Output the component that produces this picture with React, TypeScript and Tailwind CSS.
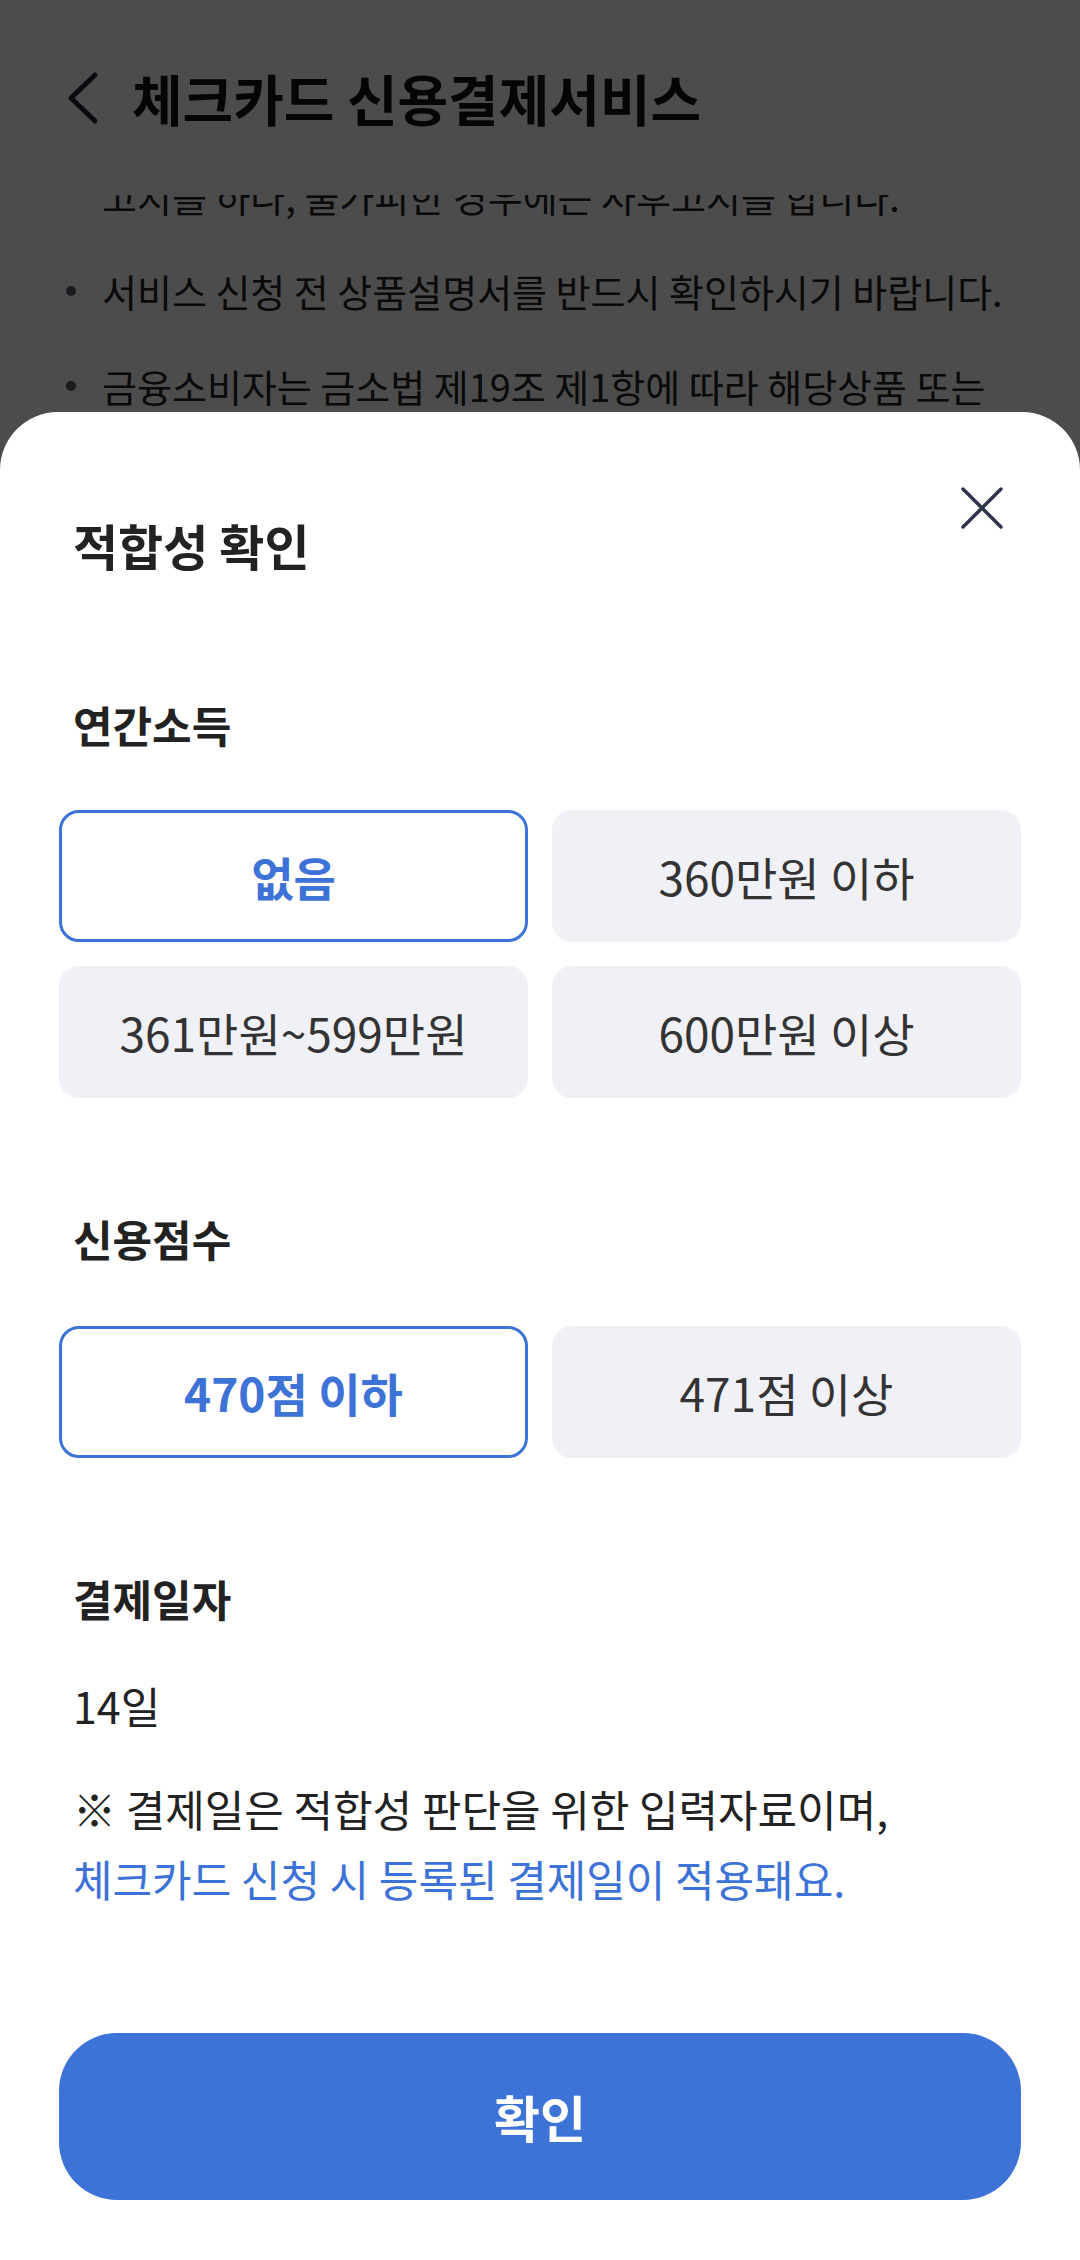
import { useState } from "react";

const font = { fontFamily: '"Noto Sans CJK KR", "Noto Sans", sans-serif' };

const incomeOptions = ["없음", "360만원 이하", "361만원~599만원", "600만원 이상"];
const scoreOptions = ["470점 이하", "471점 이상"];

function Option({
  label,
  selected,
  onClick,
}: {
  label: string;
  selected: boolean;
  onClick: () => void;
}) {
  return (
    <button
      type="button"
      onClick={onClick}
      className={
        selected
          ? "h-[132px] rounded-[20px] border-[3px] border-[#3d72d6] bg-white text-[46px] font-bold text-[#3d72d6]"
          : "h-[132px] rounded-[20px] bg-[#f0f1f6] text-[46px] text-[#333333]"
      }
    >
      {label}
    </button>
  );
}

function App() {
  const [income, setIncome] = useState(0);
  const [score, setScore] = useState(0);

  return (
    <div
      className="relative w-[1080px] h-[2260px] overflow-hidden bg-white"
      style={font}
    >
      {/* page behind the sheet */}
      <div className="flex flex-col">
        <div className="h-[195px] flex items-center pl-[62px] gap-[30px]">
          <svg width="40" height="56" viewBox="0 0 40 56" fill="none">
            <path
              d="M33 5 L9 28 L33 51"
              stroke="#1e2738"
              strokeWidth="5"
              strokeLinecap="round"
              strokeLinejoin="round"
            />
          </svg>
          <h1 className="text-[55px] font-bold text-[#111111] leading-none">
            체크카드 신용결제서비스
          </h1>
        </div>
        <div className="h-[300px] overflow-hidden">
          <ul className="-mt-[27px] flex flex-col gap-[39px] text-[38px] text-[#222222]">
            <li className="pl-[102px] leading-[56px]">
              고지를 하나, 불가피한 경우에는 사후고지를 합니다.
            </li>
            <li className="relative pl-[102px] leading-[56px]">
              <span className="absolute left-[66px] top-[23px] w-[10px] h-[10px] rounded-full bg-[#555a66]" />
              서비스 신청 전 상품설명서를 반드시 확인하시기 바랍니다.
            </li>
            <li className="relative pl-[102px] leading-[56px]">
              <span className="absolute left-[66px] top-[23px] w-[10px] h-[10px] rounded-full bg-[#555a66]" />
              금융소비자는 금소법 제19조 제1항에 따라 해당상품 또는
            </li>
          </ul>
        </div>
      </div>

      {/* dim overlay */}
      <div className="absolute inset-0 bg-black/70" />

      {/* bottom sheet */}
      <div className="absolute left-0 right-0 bottom-0 h-[1848px] bg-white rounded-t-[58px] px-[59px] flex flex-col">
        <div className="relative pt-[103px] pl-[14px]">
          <h2 className="text-[49px] leading-[60px] font-bold text-[#222222]">
            적합성 확인
          </h2>
          <button
            type="button"
            className="absolute right-[17px] top-[74px] w-[44px] h-[44px]"
          >
            <svg width="44" height="44" viewBox="0 0 44 44" fill="none">
              <path
                d="M3 3 L41 41 M41 3 L3 41"
                stroke="#2d3548"
                strokeWidth="3.5"
                strokeLinecap="round"
              />
            </svg>
          </button>
        </div>

        <h3 className="mt-[121px] pl-[14px] text-[43px] leading-[56px] font-bold text-[#222222]">
          연간소득
        </h3>
        <div className="mt-[58px] grid grid-cols-2 gap-[24px]">
          {incomeOptions.map((o, i) => (
            <Option
              key={o}
              label={o}
              selected={income === i}
              onClick={() => setIncome(i)}
            />
          ))}
        </div>

        <h3 className="mt-[112px] pl-[14px] text-[43px] leading-[56px] font-bold text-[#222222]">
          신용점수
        </h3>
        <div className="mt-[60px] grid grid-cols-2 gap-[24px]">
          {scoreOptions.map((o, i) => (
            <Option
              key={o}
              label={o}
              selected={score === i}
              onClick={() => setScore(i)}
            />
          ))}
        </div>

        <h3 className="mt-[112px] pl-[14px] text-[43px] leading-[56px] font-bold text-[#222222]">
          결제일자
        </h3>
        <p className="mt-[51px] pl-[14px] text-[43px] leading-[56px] text-[#222222]">
          14일
        </p>
        <p className="mt-[40px] pl-[14px] text-[43px] leading-[70px] text-[#222222]">
          ※ 결제일은 적합성 판단을 위한 입력자료이며,
          <br />
          <span className="text-[#3d72d6]">
            체크카드 신청 시 등록된 결제일이 적용돼요.
          </span>
        </p>

        <button
          type="button"
          className="mt-auto mb-[60px] h-[167px] rounded-[58px] bg-[#3d73d7] text-white text-[50px] font-bold"
        >
          확인
        </button>
      </div>
    </div>
  );
}

export default App;
